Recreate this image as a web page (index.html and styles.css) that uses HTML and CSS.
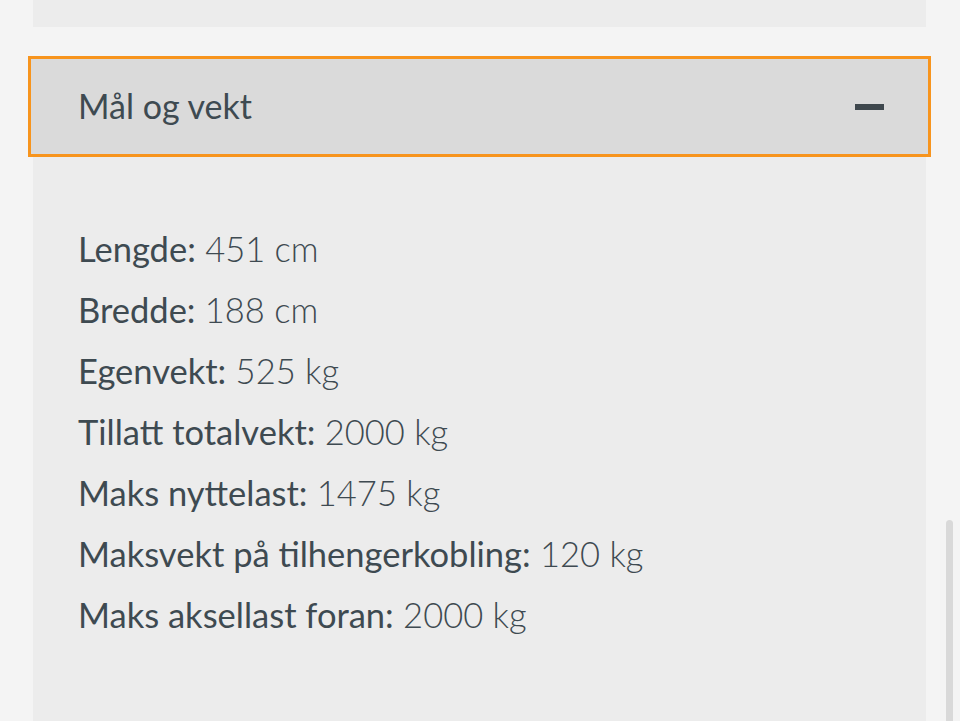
FILE: index.html
```html
<!DOCTYPE html>
<html lang="no">
<head>
<meta charset="utf-8">
<link rel="stylesheet" href="styles.css">
</head>
<body>
<div class="page">
  <div class="card-prev"></div>
  <section class="accordion">
    <button class="acc-head" type="button">
      <span class="acc-title">Mål og vekt</span>
      <span class="acc-minus"></span>
    </button>
    <div class="acc-body">
      <p class="spec"><b>Lengde:</b> 451 cm</p>
      <p class="spec"><b>Bredde:</b> 188 cm</p>
      <p class="spec"><b>Egenvekt:</b> 525 kg</p>
      <p class="spec"><b>Tillatt totalvekt:</b> 2000 kg</p>
      <p class="spec"><b>Maks nyttelast:</b> 1475 kg</p>
      <p class="spec"><b>Maksvekt på tilhengerkobling:</b> 120 kg</p>
      <p class="spec"><b>Maks aksellast foran:</b> 2000 kg</p>
    </div>
  </section>
</div>
<div class="scrollbar"></div>
</body>
</html>
```
FILE: styles.css
```css
html, body {
  margin: 0;
  height: 100%;
  overflow: hidden;
}
body {
  background: #f4f4f4;
  font-family: Lato, "Open Sans", sans-serif;
  color: #3e4a51;
}
.page {
  padding: 0 34px 0 33px;
}
.card-prev {
  height: 27px;
  background: #ececec;
}
.accordion {
  margin-top: 29px;
}
.acc-head {
  display: flex;
  align-items: center;
  justify-content: space-between;
  box-sizing: border-box;
  width: calc(100% + 10px);
  margin: 0 -5px;
  height: 101px;
  padding: 0 44px 0 47px;
  background: #dadada;
  border: 3px solid #f7941d;
  font: inherit;
  color: inherit;
  text-align: left;
}
.acc-title {
  font-size: 34px;
  font-weight: 400;
  margin-top: -2px;
}
.acc-minus {
  width: 29px;
  height: 6px;
  background: #3e474d;
}
.acc-body {
  background: #ececec;
  padding: 61px 45px 100px;
}
.spec {
  margin: 0;
  font-size: 34.5px;
  line-height: 61px;
  font-weight: 300;
  white-space: nowrap;
}
.spec b {
  font-weight: 400;
}
.scrollbar {
  position: fixed;
  right: 7px;
  top: 520px;
  bottom: 0;
  width: 7px;
  border-radius: 4px 4px 0 0;
  background: #d9d9d9;
}
```
